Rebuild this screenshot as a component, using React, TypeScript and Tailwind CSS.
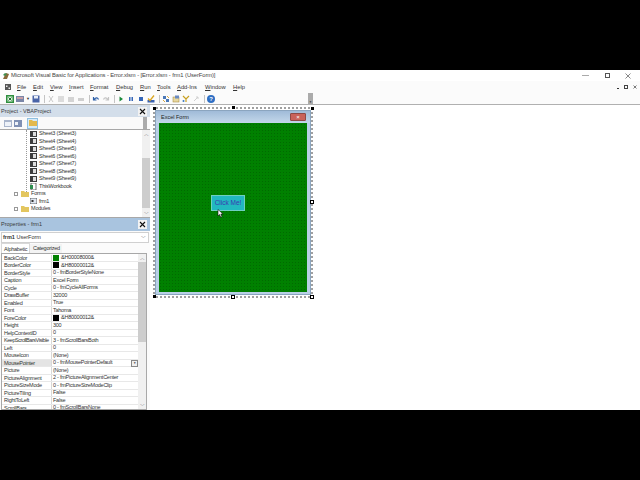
import React from "react";

const menus = [
  ["F", "ile", "w-[16px]"],
  ["E", "dit", "w-[17px]"],
  ["V", "iew", "w-[19px]"],
  ["I", "nsert", "w-[21px]"],
  ["F", "ormat", "w-[26px]"],
  ["D", "ebug", "w-[24px]"],
  ["R", "un", "w-[17px]"],
  ["T", "ools", "w-[20px]"],
  ["A", "dd-Ins", "w-[28px]"],
  ["W", "indow", "w-[28px]"],
  ["H", "elp", "w-[20px]"],
];

const sheets = ["Sheet3 (Sheet3)", "Sheet4 (Sheet4)", "Sheet5 (Sheet5)", "Sheet6 (Sheet6)", "Sheet7 (Sheet7)", "Sheet8 (Sheet8)", "Sheet9 (Sheet9)"];

const props: [string, string, string?][] = [
  ["BackColor", "&H00008000&", "green"],
  ["BorderColor", "&H80000012&", "black"],
  ["BorderStyle", "0 - fmBorderStyleNone"],
  ["Caption", "Excel Form"],
  ["Cycle", "0 - fmCycleAllForms"],
  ["DrawBuffer", "32000"],
  ["Enabled", "True"],
  ["Font", "Tahoma"],
  ["ForeColor", "&H80000012&", "black"],
  ["Height", "300"],
  ["HelpContextID", "0"],
  ["KeepScrollBarsVisible", "3 - fmScrollBarsBoth"],
  ["Left", "0"],
  ["MouseIcon", "(None)"],
  ["MousePointer", "0 - fmMousePointerDefault"],
  ["Picture", "(None)"],
  ["PictureAlignment", "2 - fmPictureAlignmentCenter"],
  ["PictureSizeMode", "0 - fmPictureSizeModeClip"],
  ["PictureTiling", "False"],
  ["RightToLeft", "False"],
  ["ScrollBars", "0 - fmScrollBarsNone"],
];

function Sep() {
  return <div className="w-px h-[8px] bg-[#c4c4c4] mx-[2px]" />;
}

function Tool({ children }: { children: React.ReactNode }) {
  return (
    <svg width="8" height="8" viewBox="0 0 8 8" className="mr-[2px] shrink-0">
      {children}
    </svg>
  );
}

function Toolbar() {
  return (
    <div className="h-[11px] flex items-center pl-[6px] bg-[#fbfbfb] relative">
      <Tool>
        <rect x="0" y="0" width="8" height="8" fill="#2f8f3f" />
        <rect x="1.5" y="1.5" width="5" height="5" fill="#d9efd9" />
        <path d="M2.5 2.5L5.5 5.5M5.5 2.5L2.5 5.5" stroke="#1d6b2c" />
      </Tool>
      <Tool>
        <rect x="0" y="1" width="8" height="6" fill="#7a86a8" />
        <rect x="1" y="2" width="6" height="2" fill="#c9a0a8" />
      </Tool>
      <span className="text-[4px] text-[#333] mr-[2px]">▼</span>
      <Tool>
        <rect x="0.5" y="0.5" width="7" height="7" fill="#4a64a8" />
        <rect x="2" y="1" width="4" height="2.5" fill="#e8eef8" />
      </Tool>
      <Sep />
      <Tool><path d="M2 1L6 7M6 1L2 7" stroke="#c8c8c8" /></Tool>
      <Tool><rect x="1" y="1" width="6" height="6" fill="#dcdcdc" /></Tool>
      <Tool><rect x="1" y="2" width="6" height="5" fill="#d4d4d4" /></Tool>
      <Tool><path d="M1 3h6v3H1z" fill="#cfcfcf" /></Tool>
      <Sep />
      <Tool><path d="M1.5 2v3h3M2 5C3 2.500 5.500 2 6.500 4.500" stroke="#2d5fa8" fill="none" strokeWidth="1.200" /></Tool>
      <Tool><path d="M6.500 2v3h-3M6 5C5 2.500 2.500 2 1.500 4.500" stroke="#c4c4c4" fill="none" strokeWidth="1.200" /></Tool>
      <Sep />
      <Tool><path d="M2.500 1.500L6 4L2.500 6.500z" fill="#1a8a3a" /></Tool>
      <Tool><path d="M2 2h1.500v4H2zM4.500 2H6v4H4.500z" fill="#3566b8" /></Tool>
      <Tool><rect x="2" y="2" width="4" height="4" fill="#3566b8" /></Tool>
      <Tool>
        <rect x="0.500" y="5" width="7" height="2.500" fill="#3a62b0" />
        <path d="M1 3.500L3 5.500L7 0.500" stroke="#d9a520" fill="none" strokeWidth="1.300" />
      </Tool>
      <Sep />
      <Tool><path d="M1 1h3v3H1zM4 4h3v3H4z" fill="#4a78b8" /><path d="M5 1l2 2M1 5l2 2" stroke="#d8a840" /></Tool>
      <Tool><rect x="1" y="2" width="6" height="5" fill="#e8d8a0" stroke="#a08030" strokeWidth="0.500" /><rect x="3" y="0.500" width="4" height="3" fill="#6a8ac0" /></Tool>
      <Tool><path d="M1 1l3 3l3-3M4 4v3" stroke="#c8a020" fill="none" strokeWidth="1.200" /><circle cx="1.500" cy="6" r="1" fill="#3a78c0" /></Tool>
      <Tool><path d="M2 6L6 2M4 2h2v2" stroke="#d0d0d0" fill="none" /></Tool>
      <Sep />
      <div className="w-[8px] h-[8px] rounded-full bg-[#2f6fc4] text-white text-[6px] leading-[8px] text-center font-bold">?</div>
      <div className="absolute left-[308px] top-0 w-[5px] h-[11px] bg-[#ababab] flex items-end justify-center">
        <span className="text-[3px] leading-[4px] text-[#333]">▼</span>
      </div>
    </div>
  );
}

function Scrollbar({ thumbTop, thumbHeight }: { thumbTop: string; thumbHeight: string }) {
  return (
    <div className="w-[8px] shrink-0 bg-[#f0f0f0] flex flex-col items-center">
      <span className="h-[8px] text-[5px] leading-[8px] text-[#555]">︿</span>
      <div className={`w-full flex-1 ${thumbTop}`}>
        <div className={`w-full bg-[#cdcdcd] ${thumbHeight}`} />
      </div>
      <span className="h-[8px] text-[5px] leading-[8px] text-[#555]">﹀</span>
    </div>
  );
}

function PanelHeader({ title, bg }: { title: string; bg: string }) {
  return (
    <div className={`flex items-center justify-between pl-[1px] pr-[3px] ${bg}`}>
      <span className="text-[5.5px] text-[#3a3a3a]">{title}</span>
      <span className="w-[9px] h-[9px] bg-[#f2f2f2] flex items-center justify-center">
        <svg width="7" height="7" viewBox="0 0 7 7"><path d="M1 1L6 6M6 1L1 6" stroke="#111" strokeWidth="1.100" /></svg>
      </span>
    </div>
  );
}

function ProjectPanel() {
  return (
    <div className="h-[113px] flex flex-col">
      <div className="h-[12px] flex flex-col justify-center">
        <PanelHeader title="Project - VBAProject" bg="bg-[#d3deea] h-[12px]" />
      </div>
      <div className="h-[12px] flex items-center gap-[2px] pl-[4px] bg-[#fafafa]">
        <svg width="8" height="7" viewBox="0 0 8 7"><rect width="8" height="7" fill="#aab6cc" /><rect x="1" y="2" width="6" height="4" fill="#eef2f8" /></svg>
        <svg width="8" height="7" viewBox="0 0 8 7"><rect width="8" height="7" fill="#7f90b4" /><rect x="1" y="2" width="3" height="3" fill="#eef2f8" /></svg>
        <div className="w-[11px] h-[11px] ml-[3px] bg-[#d7ebf8] border border-[#8fc0e0] flex items-center justify-center">
          <svg width="8" height="6" viewBox="0 0 8 6"><path d="M0 0h3l1 1h4v5H0z" fill="#e3b94c" /></svg>
        </div>
        <div className="ml-auto mr-[3px] w-[4px] h-full bg-[#ababab]" />
      </div>
      <div className="flex-1 flex border-y border-[#a8a8a8] bg-white min-h-0">
        <div className="flex-1 text-[5.5px] tracking-[-0.2px] leading-[7.500px] text-[#333] relative">
          <div className="absolute left-[26px] top-0 h-[62px] border-l border-dotted border-[#999]" />
          {sheets.map((s) => (
            <div key={s} className="h-[7.500px] flex items-center pl-[30px]">
              <svg width="7" height="6" viewBox="0 0 7 6" className="mr-[2px]"><rect width="7" height="6" fill="#3d3d3d" /><rect x="3" y="1" width="3" height="4" fill="#dedede" /></svg>
              {s}
            </div>
          ))}
          <div className="h-[7.500px] flex items-center pl-[30px]">
            <svg width="7" height="7" viewBox="0 0 7 7" className="mr-[2px]"><rect x="1" width="5" height="7" fill="#fff" stroke="#333" strokeWidth="0.700" /><rect y="2" width="3" height="4" fill="#2f8f4f" /></svg>
            ThisWorkbook
          </div>
          <div className="h-[7.500px] flex items-center pl-[14px]">
            <span className="w-[4px] h-[4px] border border-[#999] mr-[3px]" />
            <svg width="8" height="6" viewBox="0 0 8 6" className="mr-[2px]"><path d="M0 0h3l1 1h4v5H0z" fill="#e3c65f" /></svg>
            Forms
          </div>
          <div className="h-[7.500px] flex items-center pl-[30px]">
            <svg width="7" height="6" viewBox="0 0 7 6" className="mr-[2px]"><rect width="7" height="6" fill="#dfe6f0" stroke="#333" strokeWidth="0.700" /><rect x="1.500" y="2" width="2" height="2" fill="#333" /></svg>
            frm1
          </div>
          <div className="h-[7.500px] flex items-center pl-[14px]">
            <span className="w-[4px] h-[4px] border border-[#999] mr-[3px]" />
            <svg width="8" height="6" viewBox="0 0 8 6" className="mr-[2px]"><path d="M0 0h3l1 1h4v5H0z" fill="#e3c65f" /></svg>
            Modules
          </div>
        </div>
        <Scrollbar thumbTop="pt-[20px]" thumbHeight="h-[50px]" />
      </div>
    </div>
  );
}

function PropertiesPanel() {
  return (
    <div className="flex-1 flex flex-col min-h-0">
      <div className="h-[13px] flex flex-col justify-center bg-[#a9c4df]">
        <PanelHeader title="Properties - frm1" bg="bg-[#a9c4df] h-[13px]" />
      </div>
      <div className="h-[11px] mx-[1px] mt-[1px] flex items-center justify-between border border-[#d0d0d0] pl-[1px] pr-[2px] text-[5.5px] bg-white text-[#333]">
        <span><b>frm1</b> UserForm</span>
        <span className="text-[5px]">﹀</span>
      </div>
      <div className="h-[10px] flex items-end pl-[1px] text-[5.500px] tracking-[-0.25px] text-[#333]">
        <div className="h-[10px] w-[29px] pl-[2px] leading-[10px] bg-white border-x border-t border-[#d8d8d8]">Alphabetic</div>
        <div className="h-[9px] pl-[3px] pr-[2px] leading-[9px] bg-[#f3f3f3]">Categorized</div>
      </div>
      <div className="flex-1 flex border border-[#a8a8a8] ml-[1px] mr-[3px] bg-white min-h-0 overflow-hidden">
        <div className="flex-1 pt-[0.500px] overflow-hidden">
          {props.map(([name, value, swatch]) => (
            <div key={name} className="h-[7.500px] flex text-[5.500px] tracking-[-0.25px] leading-[7px] text-[#333] border-b border-[#e8e8e8]">
              <div className={`w-[50px] pl-[2px] border-r border-[#d8d8d8] whitespace-nowrap ${name === "MousePointer" ? "bg-[#e4e4e4]" : ""} ${name === "KeepScrollBarsVisible" ? "tracking-[-0.45px]" : ""}`}>{name}</div>
              <div className="flex-1 pl-[1px] flex items-center whitespace-nowrap relative">
                {swatch === "green" && <span className="w-[6px] h-[6px] bg-[#008000] mr-[2px] shrink-0" />}
                {swatch === "black" && <span className="w-[6px] h-[6px] bg-black mr-[2px] shrink-0" />}
                {value}
                {name === "MousePointer" && (
                  <span className="absolute right-0 top-0 w-[7px] h-[7px] bg-[#f0f0f0] border border-[#888] text-[3px] leading-[5px] text-center">▼</span>
                )}
              </div>
            </div>
          ))}
        </div>
        <Scrollbar thumbTop="pt-0" thumbHeight="h-[80px]" />
      </div>
    </div>
  );
}

function Handle({ className }: { className: string }) {
  return <span className={`absolute border border-black ${className}`} />;
}

function FormDesigner() {
  return (
    <div className="flex-1 bg-white pl-[3px] pt-[2px] relative">
      <div className="relative w-[160px] h-[191px] pt-[1px] pb-[1px] border-2 border-dotted border-[#a0a0a0]">
        <Handle className="-left-[2px] -top-[2px] w-[3px] h-[3px] bg-black" />
        <Handle className="left-[77px] -top-[3px] w-[3px] h-[3px] bg-black" />
        <Handle className="-right-[3px] -top-[2px] w-[3px] h-[3px] bg-black" />
        <Handle className="-right-[3px] top-[91px] w-[4px] h-[4px] bg-white" />
        <Handle className="-left-[2px] -bottom-[2px] w-[3px] h-[3px] bg-black" />
        <Handle className="left-[76px] -bottom-[3px] w-[4px] h-[4px] bg-white" />
        <Handle className="-right-[3px] -bottom-[3px] w-[4px] h-[4px] bg-white" />
        <div className="h-full flex flex-col bg-[#b9d0e6] border border-[#8ba5bf] px-[3px] pb-[2px]">
          <div className="h-[12px] shrink-0 flex items-center justify-between pl-[5px] pr-[4px] bg-gradient-to-b from-[#a0bbd8] to-[#c4d8ea] -mx-[3px]">
            <span className="text-[5.500px] text-[#222]">Excel Form</span>
            <span className="w-[16px] h-[8px] rounded-[1px] bg-[#c9625a] border border-[#8f4a46] text-white text-[6px] leading-[6px] text-center">×</span>
          </div>
          <div className="flex-1 flex flex-col items-center bg-[#008000] bg-[radial-gradient(#006a00_0.7px,transparent_0.8px)] bg-[size:3px_3px] pt-[72px]">
            <div className="relative w-[34px] h-[16px] mr-[10px] bg-[#22b8c0] border border-[#6fd0c0] text-[6.500px] leading-[14px] text-center text-[#3a3ab0]">
              Click Me!
              <svg width="7" height="9" viewBox="0 0 7 9" className="absolute left-[5px] top-[13px]">
                <path d="M1 0.500V7L2.500 5.500L3.800 8.300L5 7.700L3.800 5H6z" fill="#fff" stroke="#111" strokeWidth="0.600" />
              </svg>
            </div>
          </div>
        </div>
      </div>
    </div>
  );
}

export default function App() {
  return (
    <div className="w-[640px] h-[480px] bg-black flex flex-col font-['Liberation_Sans',sans-serif] overflow-hidden">
      <div className="h-[70px] shrink-0" />
      <div className="h-[340px] shrink-0 flex flex-col bg-white">
        <div className="h-[11px] shrink-0 flex items-center pl-[2px] bg-white relative">
          <svg width="8" height="8" viewBox="0 0 8 8" className="mr-[1px]">
            <path d="M1 7L4 1L7 2L5 7z" fill="#8a6a3a" />
            <path d="M1 3L3 1L5 2L3 4z" fill="#3f8f4f" />
          </svg>
          <span className="text-[5.800px] tracking-[-0.08px] text-[#444] whitespace-nowrap">Microsoft Visual Basic for Applications - Error.xlsm - [Error.xlsm - frm1 (UserForm)]</span>
          <div className="absolute right-[9px] top-0 h-[11px] flex items-center gap-[15px] text-[#777]">
            <span className="w-[7px] h-px mr-[1px] bg-[#aaa]" />
            <span className="w-[5px] h-[5px] border border-[#555]" />
            <svg width="6" height="6" viewBox="0 0 6 6"><path d="M0.500 0.500L5.500 5.500M5.500 0.500L0.500 5.500" stroke="#555" strokeWidth="0.700" /></svg>
          </div>
        </div>
        <div className="h-[12px] shrink-0 flex items-center pl-[5px] bg-[#fbfbfb] relative">
          <svg width="6" height="6" viewBox="0 0 6 6" className="mr-[6px] shrink-0"><rect width="6" height="6" fill="#555" /><rect x="1" y="1.500" width="1.500" height="1.500" fill="#eee" /><rect x="3.500" y="3.500" width="1.500" height="1.500" fill="#eee" /></svg>
          {menus.map(([first, rest, w]) => (
            <span key={first + rest} className={`${w} text-[5.800px] text-[#333] whitespace-nowrap`}>
              <span className="underline">{first}</span>{rest}
            </span>
          ))}
          <div className="absolute right-[3px] top-0 h-[12px] flex items-center gap-[5px] text-[#444]">
            <span className="w-[2px] h-px mt-[3px] bg-[#333]" />
            <span className="w-[4px] h-[4px] border border-[#444]" />
            <svg width="4" height="4" viewBox="0 0 4 4"><path d="M0.500 0.500L3.500 3.500M3.500 0.500L0.500 3.500" stroke="#444" strokeWidth="0.700" /></svg>
          </div>
        </div>
        <Toolbar />
        <div className="flex-1 flex border-t border-[#b0b0b0] min-h-0">
          <div className="w-[150px] shrink-0 flex flex-col bg-[#fbfbfb] min-h-0">
            <ProjectPanel />
            <PropertiesPanel />
          </div>
          <FormDesigner />
        </div>
      </div>
      <div className="flex-1" />
    </div>
  );
}
